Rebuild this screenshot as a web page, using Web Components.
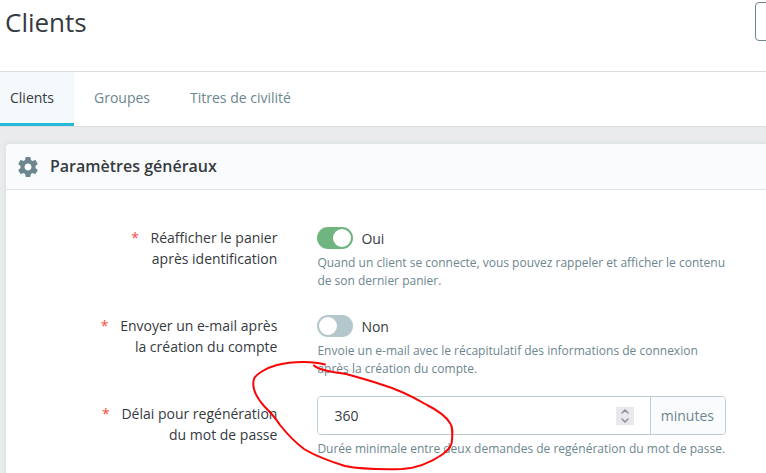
<!DOCTYPE html>
<html lang="fr">
<head>
<meta charset="utf-8">
<meta name="viewport" content="width=device-width, initial-scale=1">
<title>Clients</title>
<style>
html { min-height: 100%; background: #eaebec; }
body { margin: 0; overflow: hidden; font: 14px/21px "Open Sans", sans-serif; color: #363a41; }
</style>
</head>
<body>
<customers-page></customers-page>
<script>
const define = (name, html, setup) => {
  const template = document.createElement('template');
  template.innerHTML = '<style>*{box-sizing:border-box}</style>' + html;
  customElements.define(name, class extends HTMLElement {
    constructor() {
      super();
      this.attachShadow({ mode: 'open' }).append(template.content.cloneNode(true));
    }
    connectedCallback() { if (setup) setup(this, this.shadowRoot); }
  });
};

define('page-header', `
<style>
:host { display: flex; justify-content: space-between; align-items: flex-start; height: 72px; padding: 2px 0 0 5px; background: #fff; border-bottom: 1px solid #ddd; }
h1 { margin: 0; font-size: 26px; line-height: 40px; font-weight: 400; }
button { width: 40px; height: 39px; margin-right: -29px; background: #fff; border: 1px solid #6c868e; border-radius: 4px; }
</style>
<h1><slot></slot></h1>
<button type="button" aria-label="Aide"></button>`);

define('nav-tabs', `
<style>
:host { display: block; background: #fff; border-bottom: 1px solid #ddd; }
nav { display: flex; }
</style>
<nav><slot></slot></nav>`);

define('nav-tab', `
<style>
:host { display: block; }
a { display: block; padding: 15px 20px; border-bottom: 3px solid transparent; color: #6c868e; text-decoration: none; }
:host([active]) a { color: #363a41; background: #f4f9fb; border-color: #25b9d7; padding-left: 10px; }
</style>
<a href="#"><slot></slot></a>`, (el, root) => {
  if (el.hasAttribute('active')) root.querySelector('a').setAttribute('aria-current', 'page');
});

define('settings-card', `
<style>
:host { display: block; margin: 16px 0 0 5px; background: #fff; border: 1px solid #dbe6e9; border-right: 0; border-radius: 5px 0 0 0; box-shadow: 0 0 4px rgba(0,0,0,.06); overflow: hidden; }
header { display: flex; align-items: center; gap: 12px; padding: 11px 12px; background: #fafbfc; border-bottom: 1px solid #dbe6e9; }
h2 { margin: 0; font-size: 16px; line-height: 23px; font-weight: 600; }
svg { width: 20px; height: 20px; fill: #6c868e; }
form { display: grid; gap: 18px; padding: 30px 40px 30px 0; }
</style>
<header>
<svg viewBox="2 2 20 20" aria-hidden="true"><path d="M19.43 12.98c.04-.32.07-.64.07-.98s-.03-.66-.07-.98l2.11-1.65c.19-.15.24-.42.12-.64l-2-3.46c-.12-.22-.39-.3-.61-.22l-2.49 1c-.52-.4-1.08-.73-1.69-.98l-.38-2.65C14.46 2.18 14.25 2 14 2h-4c-.25 0-.46.18-.49.42l-.38 2.65c-.61.25-1.17.59-1.69.98l-2.49-1c-.23-.09-.49 0-.61.22l-2 3.46c-.13.22-.07.49.12.64l2.11 1.65c-.04.32-.07.65-.07.98s.03.66.07.98l-2.11 1.65c-.19.15-.24.42-.12.64l2 3.460c.12.22.39.3.61.22l2.49-1c.52.4 1.08.73 1.69.98l.38 2.650c.03.24.24.42.49.42h4c.25 0 .46-.18.49-.42l.38-2.650c.61-.25 1.17-.59 1.69-.98l2.49 1c.23.09.49 0 .61-.22l2-3.460c.12-.22.07-.49-.12-.64l-2.11-1.650zM12 15.500c-1.930 0-3.500-1.570-3.500-3.500s1.570-3.500 3.500-3.500 3.500 1.570 3.500 3.500-1.570 3.500-3.500 3.500z"/></svg>
<h2><slot name="title"></slot></h2>
</header>
<form><slot></slot></form>`);

const rowStyle = `
:host { display: grid; grid-template-columns: 2fr 3fr; column-gap: 39px; align-items: start; }
.label { display: flex; justify-content: flex-end; padding: 7px 1px 0 0; text-align: right; }
label { max-width: 182px; }
label span { color: #f54c3e; margin-right: 8px; }
p { margin: 0; font-size: 12px; line-height: 18px; color: #6c868e; }
`;

define('switch-row', `
<style>${rowStyle}
.control { display: flex; align-items: flex-start; gap: 8px; padding: 7px 0 4px; line-height: 23px; }
input { appearance: none; width: 36px; height: 22px; margin: 0; padding: 2px; border-radius: 11px; background: #b3c7cd; display: flex; }
input::before { content: ""; width: 18px; height: 18px; border-radius: 50%; background: #fff; }
input:checked { background: #70b580; justify-content: flex-end; }
</style>
<div class="label"><label for="toggle"><span>*</span> <slot name="label"></slot></label></div>
<div>
<div class="control"><input type="checkbox" role="switch" id="toggle"><output for="toggle"></output></div>
<p><slot></slot></p>
</div>`, (el, root) => {
  const input = root.querySelector('input');
  const output = root.querySelector('output');
  const update = () => { output.textContent = input.checked ? 'Oui' : 'Non'; };
  input.checked = el.hasAttribute('checked');
  input.addEventListener('change', update);
  update();
});

define('number-row', `
<style>${rowStyle}
.group { display: flex; height: 39px; margin-bottom: 5px; border: 1px solid #bbcdd2; border-radius: 4px; overflow: hidden; }
input { appearance: textfield; flex: 1; min-width: 0; border: 0; outline: 0; padding: 0 16px; background: #fff; color: inherit; font: inherit; }
input::-webkit-inner-spin-button { appearance: none; margin: 0; }
.spin { align-self: center; display: grid; width: 18px; height: 18px; margin-right: 16px; padding: 1px 0; background: #e9e9ed; }
.spin button { display: grid; place-items: center; padding: 0; border: 0; height: 8px; background: none; }
.spin button:first-child { align-items: start; padding-top: 1px; }
.spin button:last-child { align-items: end; padding-bottom: 1px; }
svg { display: block; width: 8px; height: 5px; fill: none; stroke: #8f8f9d; stroke-width: 1.500; stroke-linecap: round; }
.unit { display: flex; align-items: center; padding: 0 11px 0 10px; border-left: 1px solid #bbcdd2; background: #fafbfc; color: #6c868e; }
</style>
<div class="label"><label for="value"><span>*</span> <slot name="label"></slot></label></div>
<div>
<div class="group">
<input type="number" id="value">
<div class="spin">
<button type="button" aria-label="Augmenter" data-step="1"><svg viewBox="0 0 8 5"><path d="M1 4 4 1 7 4"/></svg></button>
<button type="button" aria-label="Diminuer" data-step="-1"><svg viewBox="0 0 8 5"><path d="M1 1 4 4 7 1"/></svg></button>
</div>
<div class="unit"><slot name="unit"></slot></div>
</div>
<p><slot></slot></p>
</div>`, (el, root) => {
  const input = root.querySelector('input');
  input.value = el.getAttribute('value');
  root.querySelectorAll('button').forEach(b => b.addEventListener('click', () => {
    input.value = Number(input.value) + Number(b.dataset.step);
  }));
});

define('red-marker', `
<style>
:host { position: absolute; left: 250px; top: 358px; pointer-events: none; }
svg { display: block; width: 206px; height: 115px; fill: none; stroke: #fa0505; stroke-width: 2; stroke-linecap: round; stroke-linejoin: round; }
</style>
<svg viewBox="250 358 206 115" aria-hidden="true"><path d="M325 364.500C314 361 293 361 277 365C266 368 256 374 254 379C251 389 257 398 264 406C270 412 275 417 280 425C288 435 296 443 304 449C314 455 332 462 345 466C360 469 382 469.500 402 469C420 468 433 461 443 454C449 449 452 446 452 440C452.500 433 453 427 450 423C445 415 435 409 427 405C410 395 397 389 380 384C368 380 357 377 346 374C334 372 320 371 314 365.500"/></svg>`);

define('customers-page', `
<style>
:host { display: block; position: relative; }
</style>
<page-header>Clients</page-header>
<nav-tabs>
<nav-tab active>Clients</nav-tab>
<nav-tab>Groupes</nav-tab>
<nav-tab>Titres de civilité</nav-tab>
</nav-tabs>
<settings-card>
<span slot="title">Paramètres généraux</span>
<switch-row checked><span slot="label">Réafficher le panier après identification</span>Quand un client se connecte, vous pouvez rappeler et afficher le contenu de son dernier panier.</switch-row>
<switch-row><span slot="label">Envoyer un e-mail après la création du compte</span>Envoie un e-mail avec le récapitulatif des informations de connexion après la création du compte.</switch-row>
<number-row value="360"><span slot="label">Délai pour regénération du mot de passe</span><span slot="unit">minutes</span>Durée minimale entre deux demandes de regénération du mot de passe.</number-row>
</settings-card>
<red-marker></red-marker>`);
</script>
</body>
</html>
